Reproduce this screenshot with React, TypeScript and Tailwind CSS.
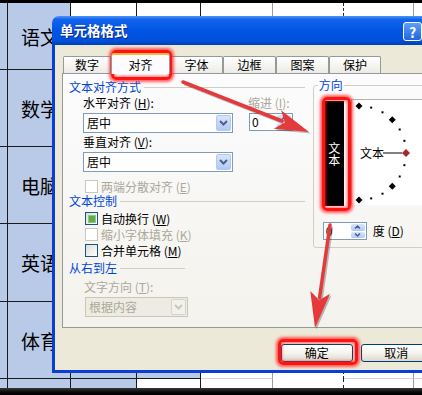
import React from "react";

const FONT = "font-['Noto_Sans_CJK_SC','Noto_Sans',sans-serif]";

// spreadsheet behind the dialog
const COLS = [8, 63, 66, 64, 72, 71, 70, 8];
const ROWS = [67, 77, 77, 78, 77, 9];
const SUBJECTS = ["语文", "数学", "电脑", "英语", "体育", ""];

const RIGHT_LINE = [
  "border-r border-r-[#1a1a1a]",
  "border-r border-r-[#1a1a1a]",
  "border-r border-r-[#1a1a1a]",
  "border-r border-r-[#1a1a1a]",
  "border-r border-r-[#9c9c9c]",
  "border-r border-dashed border-r-[#222]",
  "border-r border-r-[#9c9c9c]",
  "",
];

function isBlue(r: number, c: number) {
  if (c <= 1) return true;
  if (c === 2) return r >= 1;
  if (c === 3) return r >= 1 && r <= 4;
  return false;
}

function Sheet() {
  return (
    <div className="flex flex-col">
      <div className="h-[3px] bg-black" />
      {ROWS.map((h, r) => (
        <div key={r} className="flex" style={{ height: h }}>
          {COLS.map((w, c) => {
            const blue = isBlue(r, c);
            const bottom =
              r === ROWS.length - 1 || c === 5
                ? ""
                : blue
                  ? "border-b border-b-[#1a1a1a]"
                  : "border-b border-b-[#d4d4d4]";
            return (
              <div
                key={c}
                style={{ width: w }}
                className={`flex items-center ${blue ? "bg-[#b9cae8]" : "bg-white"} ${RIGHT_LINE[c]} ${bottom}`}
              >
                {c === 1 && (
                  <span className="pl-[13px] text-[19px] leading-none text-black">{SUBJECTS[r]}</span>
                )}
              </div>
            );
          })}
        </div>
      ))}
      <div className="h-[7px] bg-linear-to-b from-[#3a3a3a] to-black" />
    </div>
  );
}

function Chevron({ color }: { color: string }) {
  return (
    <svg width="9" height="6" viewBox="0 0 9 6">
      <path d="M1 1 L4.5 4.5 L8 1" fill="none" stroke={color} strokeWidth="2" />
    </svg>
  );
}

function Select({ value, disabled, className }: { value: string; disabled?: boolean; className?: string }) {
  return (
    <div
      className={`flex h-[20px] items-center border ${
        disabled ? "border-[#c9c7ba] bg-[#eeece2] text-[#aca899]" : "border-[#7f9db9] bg-white text-black"
      } ${className ?? ""}`}
    >
      <span className="flex-1 pl-[3px] text-[12px] leading-[12px]">{value}</span>
      <span
        className={`mr-[1px] flex h-[16px] w-[15px] items-center justify-center rounded-[2px] border ${
          disabled
            ? "border-[#d6d4c8] bg-[#f3f2ea]"
            : "border-[#b4c8f4] bg-linear-to-b from-[#d9e4fd] to-[#b3c8f5]"
        }`}
      >
        <Chevron color={disabled ? "#c9c7ba" : "#4d6185"} />
      </span>
    </div>
  );
}

function Spin({ className }: { className?: string }) {
  return (
    <div className={`flex h-[18px] w-[44px] items-center border border-[#7f9db9] bg-white ${className ?? ""}`}>
      <span className="flex-1 pl-[2px] text-[12px] leading-none text-black">0</span>
      <span className="mr-[1px] flex h-[14px] w-[14px] flex-col gap-[1px]">
        <span className="flex flex-1 items-center justify-center rounded-[2px] bg-linear-to-b from-[#d9e4fd] to-[#b3c8f5]">
          <svg width="7" height="4" viewBox="0 0 7 4">
            <path d="M1 3.5 L3.5 1 L6 3.5" fill="none" stroke="#4d6185" strokeWidth="1.5" />
          </svg>
        </span>
        <span className="flex flex-1 items-center justify-center rounded-[2px] bg-linear-to-b from-[#d9e4fd] to-[#b3c8f5]">
          <svg width="7" height="4" viewBox="0 0 7 4">
            <path d="M1 0.5 L3.5 3 L6 0.5" fill="none" stroke="#4d6185" strokeWidth="1.5" />
          </svg>
        </span>
      </span>
    </div>
  );
}

function Check({ state }: { state: "on" | "off" | "disabled" }) {
  return (
    <span
      className={`flex h-[13px] w-[13px] shrink-0 items-center justify-center border ${
        state === "disabled"
          ? "border-[#cac8bb] bg-white"
          : "border-[#1c5180] bg-linear-to-br from-[#dcdcd7] to-white"
      }`}
    >
      {state === "on" && <span className="h-[8px] w-[8px] border border-[#8ccb7e] bg-[#5eab4f]" />}
    </span>
  );
}

function CheckRow({ state, children, className }: { state: "on" | "off" | "disabled"; children: React.ReactNode; className?: string }) {
  return (
    <div className={`flex h-[13px] items-center gap-[3px] pl-[16px] ${className ?? ""}`}>
      <Check state={state} />
      <span className={`text-[12px] leading-[12px] ${state === "disabled" ? "text-[#aca899]" : "text-black"}`}>
        {children}
      </span>
    </div>
  );
}

function GroupLabel({ text, className }: { text: string; className?: string }) {
  return (
    <div className={`flex h-[12px] items-center ${className ?? ""}`}>
      <span className="text-[12px] leading-[12px] text-[#0046d5]">{text}</span>
      <span className="ml-[3px] h-px flex-1 bg-[#d0d0bf]" />
    </div>
  );
}

function Dial() {
  const cx = 7;
  const cy = 53;
  const r = 47;
  const marks = [];
  for (let a = 90; a >= -90; a -= 15) {
    const x = cx + r * Math.cos((a * Math.PI) / 180);
    const y = cy - r * Math.sin((a * Math.PI) / 180);
    if (a === 0) {
      marks.push(<polygon key={a} points={`${x},${y - 4} ${x + 4},${y} ${x},${y + 4} ${x - 4},${y}`} fill="#a3272d" />);
    } else if (a % 45 === 0) {
      marks.push(<polygon key={a} points={`${x},${y - 3.5} ${x + 3.5},${y} ${x},${y + 3.5} ${x - 3.5},${y}`} fill="#000" />);
    } else {
      marks.push(<rect key={a} x={x - 1} y={y - 1} width="2" height="2" fill="#000" />);
    }
  }
  return (
    <div className="ml-[7px] mt-[8px] h-[106px] w-[80px] border-l border-t border-[#b2b1aa] bg-white">
      <svg width="80" height="106">
        {marks}
        <text x="8" y="57.5" fontSize="12" fill="#000" fontFamily="Noto Sans CJK SC, sans-serif">
          文本
        </text>
        <line x1="31" y1="53" x2="50" y2="53" stroke="#000" strokeWidth="1" />
      </svg>
    </div>
  );
}

function Panel() {
  return (
    <div className="flex h-[255px] w-[380px] border border-[#919b9c] bg-linear-to-b from-[#fcfcfe] to-[#f3f2ec]">
      {/* left column */}
      <div className="w-[245px] pl-[6px] pt-[7px]">
        <GroupLabel text="文本对齐方式" />
        <div className="mt-[4px] flex pl-[14px]">
          <div className="w-[150px]">
            <div className="text-[12px] leading-[12px] text-black">
              水平对齐 (<u>H</u>):
            </div>
            <Select className="mt-[4px]" value="居中" />
            <div className="mt-[3px] text-[12px] leading-[12px] text-black">
              垂直对齐 (<u>V</u>):
            </div>
            <Select className="mt-[4px]" value="居中" />
          </div>
          <div className="ml-[15px]">
            <div className="text-[12px] leading-[12px] text-[#aca899]">
              缩进 (<u>I</u>):
            </div>
            <Spin className="ml-[1px] mt-[4px]" />
          </div>
        </div>
        <CheckRow state="disabled" className="mt-[8px]">
          两端分散对齐 (<u>E</u>)
        </CheckRow>
        <GroupLabel text="文本控制" className="mt-[2px]" />
        <CheckRow state="on" className="mt-[5px]">
          自动换行 (<u>W</u>)
        </CheckRow>
        <CheckRow state="disabled" className="mt-[3px]">
          缩小字体填充 (<u>K</u>)
        </CheckRow>
        <CheckRow state="off" className="mt-[3px]">
          合并单元格 (<u>M</u>)
        </CheckRow>
        <GroupLabel text="从右到左" className="mt-[5px] w-[116px]" />
        <div className="mt-[7px] pl-[15px] text-[12px] leading-[12px] text-[#aca899]">
          文字方向 (<u>T</u>):
        </div>
        <Select className="ml-[16px] mt-[4px] w-[103px]" value="根据内容" disabled />
      </div>

      {/* orientation */}
      <fieldset className="ml-[8px] mt-[5px] h-[169px] w-[130px] rounded-[3px] border border-[#d0d0bf]">
        <legend className="ml-[4px] px-[1px] text-[12px] leading-[12px] text-[#0046d5]">方向</legend>
        <div className="flex">
          <div className="ml-[10px] mt-[10px] flex h-[105px] w-[20px] items-center justify-center bg-black">
            <span className="text-[12px] leading-[20px] text-white [writing-mode:vertical-rl]">文本</span>
          </div>
          <Dial />
        </div>
        <div className="ml-[9px] mt-[16px] flex items-center">
          <Spin />
          <span className="ml-[6px] text-[12px] leading-[12px] text-black">
            度 (<u>D</u>)
          </span>
        </div>
      </fieldset>
    </div>
  );
}

const TABS = [
  { label: "数字", w: "w-[48px]" },
  { label: "对齐", w: "w-[59px]", active: true },
  { label: "字体", w: "w-[53px]" },
  { label: "边框", w: "w-[53px]" },
  { label: "图案", w: "w-[53px]" },
  { label: "保护", w: "w-[52px]" },
];

function Tabs() {
  return (
    <div className="flex h-[20px] items-end pl-[1px]">
      {TABS.map((t) =>
        t.active ? (
          <div
            key={t.label}
            className={`relative z-10 -mb-px flex h-[21px] ${t.w} items-center justify-center rounded-t-[3px] border-x border-t-2 border-x-[#919b9c] border-t-[#f5b73c] bg-[#fcfcfe] text-[12px] leading-none text-black`}
          >
            {t.label}
          </div>
        ) : (
          <div
            key={t.label}
            className={`flex h-[17px] ${t.w} items-center justify-center rounded-t-[2px] border-x border-t border-[#919b9c] bg-linear-to-b from-white to-[#ecebe5] text-[12px] leading-none text-black`}
          >
            {t.label}
          </div>
        ),
      )}
    </div>
  );
}

function XpButton({ children }: { children: React.ReactNode }) {
  return (
    <div className="flex h-[18px] w-[75px] items-center justify-center rounded-[3px] border border-[#003c74] bg-linear-to-b from-white via-[#f5f4ef] to-[#dcd8cc] text-[12px] leading-none text-black">
      {children}
    </div>
  );
}

function Dialog() {
  return (
    <div className="absolute left-[52px] top-[16px] w-[380px]">
      <div className="flex h-[29px] items-start rounded-tl-[7px] bg-[linear-gradient(180deg,#4a95fa_0%,#1364ea_12%,#0055e5_50%,#0050dc_85%,#0040b4_100%)] pl-[8px]">
        <span className="mt-[8px] w-[343px] text-[13.5px] font-bold leading-none text-white [text-shadow:1px_1px_#0b2a8a]">
          单元格格式
        </span>
        <span className="mt-[6px] flex h-[19px] w-[19px] items-center justify-center rounded-[3px] border border-white bg-linear-to-b from-[#5aa0fb] to-[#2563de] text-[14px] font-bold leading-none text-white">
          ?
        </span>
      </div>
      <div className="h-[328px] border-b-[3px] border-l-[3px] border-b-[#0b3fd4] border-l-[#0b3fd4] bg-[#ece9d8] pl-[7px] pt-[8px]">
        <Tabs />
        <Panel />
        <div className="mt-[16px] flex gap-[8px] pl-[219px]">
          <XpButton>确定</XpButton>
          <XpButton>取消</XpButton>
        </div>
      </div>
    </div>
  );
}

function Arrows() {
  const red = "#e53a3c";
  return (
    <svg className="pointer-events-none absolute left-0 top-0" width="422" height="395">
      <g transform="translate(1.5,1.5)" fill="rgba(0,0,0,0.25)" stroke="rgba(0,0,0,0.25)">
        <line x1="183" y1="82" x2="282" y2="121" strokeWidth="3.5" />
        <polygon points="309,132 273.7,128.8 284.8,122.5 281.1,110.2" stroke="none" />
        <line x1="330" y1="225" x2="319.5" y2="298" strokeWidth="3.5" />
        <polygon points="315,328 310.3,291 319.1,300.3 330.1,293.8" stroke="none" />
      </g>
      <line x1="183" y1="82" x2="282" y2="121" stroke={red} strokeWidth="3.5" strokeLinecap="round" />
      <polygon points="309,132 273.7,128.8 284.8,122.5 281.1,110.2" fill={red} />
      <line x1="330" y1="225" x2="319.5" y2="298" stroke={red} strokeWidth="3.5" strokeLinecap="round" />
      <polygon points="315,328 310.3,291 319.1,300.3 330.1,293.8" fill={red} />
    </svg>
  );
}

const GLOW =
  "absolute rounded-[5px] border-[3px] border-[#ff1212] shadow-[0_0_3px_2px_rgba(255,40,40,0.75),inset_0_0_3px_1px_rgba(255,40,40,0.7)]";

export default function App() {
  return (
    <div className={`relative h-[395px] w-[422px] overflow-hidden bg-white ${FONT}`}>
      <Sheet />
      <Dialog />
      {/* red annotations */}
      <div className={`${GLOW} left-[111px] top-[50px] h-[30px] w-[61px]`} />
      <div className={`${GLOW} left-[322px] top-[97px] h-[114px] w-[29px]`} />
      <div className={`${GLOW} left-[278px] top-[339px] h-[26px] w-[80px]`} />
      <Arrows />
    </div>
  );
}
